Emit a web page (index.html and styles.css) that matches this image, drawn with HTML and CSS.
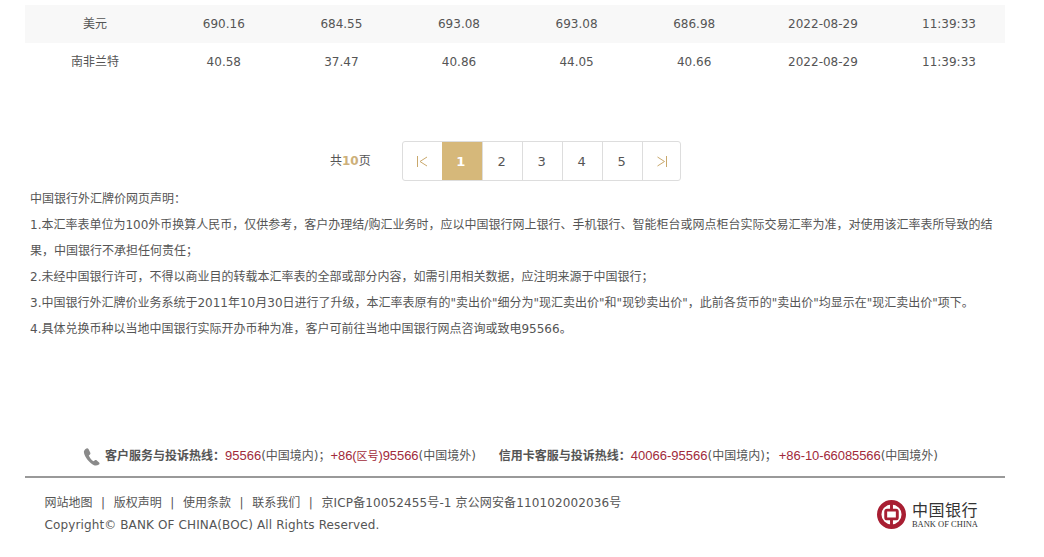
FILE: index.html
```html
<!DOCTYPE html>
<html lang="zh-CN">
<head>
    <meta charset="UTF-8">
    <title>中国银行外汇牌价</title>
    <link rel="stylesheet" href="styles.css">
</head>
<body>
    <div class="wrapper">
        <table class="rates">
            <colgroup>
                <col class="col-name">
                <col class="col-num"><col class="col-num"><col class="col-num"><col class="col-num"><col class="col-num">
                <col class="col-date">
                <col class="col-time">
            </colgroup>
            <tr class="odd">
                <td>美元</td><td>690.16</td><td>684.55</td><td>693.08</td><td>693.08</td><td>686.98</td><td>2022-08-29</td><td>11:39:33</td>
            </tr>
            <tr>
                <td>南非兰特</td><td>40.58</td><td>37.47</td><td>40.86</td><td>44.05</td><td>40.66</td><td>2022-08-29</td><td>11:39:33</td>
            </tr>
        </table>

        <div class="pager-row">
            <span class="total">共<b>10</b>页</span>
            <div class="pager">
                <a class="pg">
                    <svg width="11" height="11" viewBox="0 0 11 11"><path d="M.5 0v11M10 1 3 5.500l7 4.500" fill="none" stroke="#c9a86c"/></svg>
                </a>
                <a class="pg active">1</a>
                <a class="pg">2</a>
                <a class="pg">3</a>
                <a class="pg">4</a>
                <a class="pg">5</a>
                <a class="pg">
                    <svg width="11" height="11" viewBox="0 0 11 11"><path d="M10.500 0v11M1.500 1l7 4.500-7 4.500" fill="none" stroke="#c9a86c"/></svg>
                </a>
            </div>
        </div>

        <div class="notice">
            <p>中国银行外汇牌价网页声明：</p>
            <p>1.本汇率表单位为100外币换算人民币，仅供参考，客户办理结/购汇业务时，应以中国银行网上银行、手机银行、智能柜台或网点柜台实际交易汇率为准，对使用该汇率表所导致的结果，中国银行不承担任何责任；</p>
            <p>2.未经中国银行许可，不得以商业目的转载本汇率表的全部或部分内容，如需引用相关数据，应注明来源于中国银行；</p>
            <p>3.中国银行外汇牌价业务系统于2011年10月30日进行了升级，本汇率表原有的"卖出价"细分为"现汇卖出价"和"现钞卖出价"，此前各货币的"卖出价"均显示在"现汇卖出价"项下。</p>
            <p>4.具体兑换币种以当地中国银行实际开办币种为准，客户可前往当地中国银行网点咨询或致电95566。</p>
        </div>

        <div class="hotline">
            <svg class="phone" width="18" height="18" viewBox="0 0 18 18"><path d="M3.500 .5C1.500 1.500.5 3 1 5c1 4.500 5.500 10 10 12.200 1.500.7 3.500.3 5-.8.700-.6.700-1.300.1-1.900l-2.300-2.100c-.6-.5-1.300-.5-1.900-.1l-1.400 1C8.500 12 6.500 9.500 5.800 7.500l1.200-1c.5-.5.600-1.100.3-1.700L5.500 1C5 .4 4.300.2 3.500.5z" fill="#8a8a8a"/></svg><b>客户服务与投诉热线：</b><span class="red">95566</span>(中国境内)；<span class="red tight">+86(<small>区号</small>)95566</span>(中国境外)<b class="card">信用卡客服与投诉热线：</b><span class="red">40066-95566</span>(中国境内)；<span class="red tight gap-m">+86-10-66085566</span>(中国境外)
        </div>

        <div class="footer">
            <div class="footer-text">
                <p class="links">
                    <a>网站地图</a><i>|</i><a>版权声明</a><i>|</i><a>使用条款</a><i>|</i><a>联系我们</a><i>|</i><a class="wide">京ICP备10052455号-1 京公网安备110102002036号</a>
                </p>
                <p class="wide">Copyright© BANK OF CHINA(BOC) All Rights Reserved.</p>
            </div>
            <div class="logo">
                <svg width="29" height="29" viewBox="0 0 30 30">
                    <circle cx="15" cy="15" r="12.700" fill="none" stroke="#a81e32" stroke-width="4.600"/>
                    <rect x="9" y="10.500" width="12" height="9" rx="1.500" fill="none" stroke="#a81e32" stroke-width="3"/>
                    <path d="M15 2v8M15 20v8" stroke="#a81e32" stroke-width="3"/>
                </svg>
                <div class="logo-text">
                    <span class="logo-cn">中国银行</span>
                    <span class="logo-en">BANK OF CHINA</span>
                </div>
            </div>
        </div>
    </div>
</body>
</html>
```

FILE: styles.css
```css
* {
    box-sizing: border-box;
}

body {
    margin: 0;
    background: #fff;
    color: #555;
    font-family: "DejaVu Sans", "Noto Sans CJK SC", sans-serif;
    font-size: 12px;
}

p {
    margin: 0;
}

.wrapper {
    width: 980px;
    margin-left: 25px;
    padding-top: 5px;
}

/* rate table */
.rates {
    width: 100%;
    border-collapse: collapse;
    table-layout: fixed;
}

.col-name, .col-date { width: 140px; }
.col-num { width: 117.6px; }
.col-time { width: 112px; }

.rates td {
    height: 38px;
    padding: 0 0 1px;
    text-align: center;
    line-height: 16px;
}

.rates .odd {
    background: #f8f8f8;
}

/* pager */
.pager-row {
    display: flex;
    align-items: center;
    gap: 31px;
    margin-top: 60px;
    padding-left: 305px;
}

.total {
    margin-top: -4px;
}

.total b {
    color: #cdb07a;
}

.pager {
    display: flex;
    border: 1px solid #ddd;
    border-radius: 3px;
}

.pg {
    display: flex;
    align-items: center;
    justify-content: center;
    width: 40px;
    height: 38px;
    padding-right: 1px;
    border-left: 1px solid #ddd;
    font-size: 13px;
}

.pg:first-child {
    border-left: 0;
    width: 39px;
    padding-right: 0;
}

.pg:last-child {
    width: 38px;
    padding-right: 0;
}

.pg.active {
    border-left: 0;
    padding-right: 2px;
    background: #d6b87a;
    color: #fff;
    font-weight: bold;
}

/* disclaimer */
.notice {
    margin-top: 5px;
    padding-left: 5px;
    line-height: 26px;
}

/* hotline */
.hotline {
    height: 39px;
    margin-top: 95px;
    padding-left: 58px;
    line-height: 38px;
    white-space: nowrap;
}

.phone {
    margin-right: 4px;
    vertical-align: middle;
}

.red {
    color: #a12a3a;
    font-family: "Liberation Sans", "Noto Sans CJK SC", sans-serif;
    font-size: 13px;
}

.red small {
    font-size: 11px;
}

.tight {
    letter-spacing: -.08px;
}

.gap-m { margin-left: 2px; }
.card { margin-left: 23px; }

/* footer */
.footer {
    display: flex;
    justify-content: space-between;
    border-top: 2px solid #999;
    padding: 14px 27px 0 19.500px;
}

.footer-text {
    line-height: 22px;
}

.wide {
    letter-spacing: .12px;
}

.links i {
    font-style: normal;
    margin: 0 8.600px;
}

.logo {
    display: flex;
    align-items: center;
    gap: 6px;
    height: 32px;
    margin-top: 6px;
}

.logo-text {
    display: flex;
    flex-direction: column;
    color: #333;
}

.logo-cn {
    font-family: "Noto Sans CJK SC", sans-serif;
    font-size: 16px;
    line-height: 20px;
    letter-spacing: .5px;
}

.logo-en {
    font-family: "Liberation Serif", serif;
    font-size: 8.500px;
    line-height: 10px;
}
```
